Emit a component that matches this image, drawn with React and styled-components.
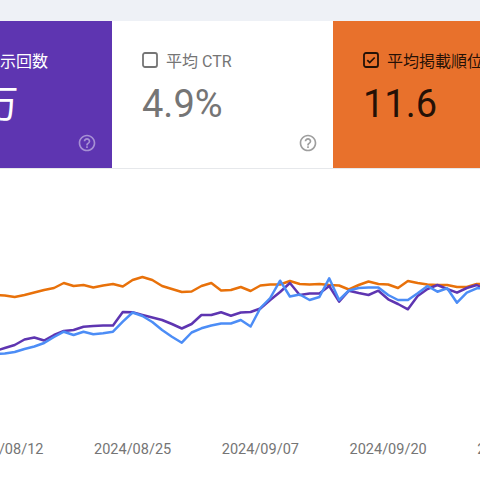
import React from 'react';
import styled, { createGlobalStyle } from 'styled-components';

const GlobalStyle = createGlobalStyle`
  html,
  body {
    margin: 0;
    padding: 0;
    background: #fff;
  }

  body {
    font-family: Roboto, 'Noto Sans CJK JP', sans-serif;
    overflow: hidden;
  }
`;

const Page = styled.div`
  width: 480px;
  height: 480px;
  overflow: hidden;
  display: flex;
  flex-direction: column;
  background: #fff;
`;

const TopBand = styled.div`
  flex: 0 0 21px;
  background: #eef1f6;
`;

const CardRow = styled.div`
  display: flex;
  flex: 0 0 147px;
  margin-left: -102px;
  border-bottom: 1px solid #e6e8eb;
`;

const Card = styled.div`
  flex: 0 0 ${({ $width }) => $width}px;
  box-sizing: border-box;
  display: flex;
  flex-direction: column;
  padding: 27px 15px 15px 30px;
  background: ${({ $bg }) => $bg};
  color: ${({ $fg }) => $fg};
`;

const CardLabel = styled.div`
  display: flex;
  align-items: center;
  gap: 8px;
  height: 24px;
  font-size: 16px;
  white-space: nowrap;
`;

const Value = styled.div`
  margin-top: 10px;
  font-size: 38px;
  line-height: 44px;
  white-space: nowrap;
`;

const Help = styled.svg`
  margin-top: auto;
  align-self: flex-end;
  width: 20px;
  height: 20px;
  fill: ${({ $color }) => $color};
`;

const ChartSvg = styled.svg`
  display: block;
  flex: 0 0 268px;
  width: 480px;
`;

const AxisRow = styled.div`
  display: flex;
  margin-left: -59px;
  height: 26px;
  line-height: 26px;
  font-size: 14.5px;
  color: #757575;
`;

const AxisLabel = styled.span`
  flex: 0 0 127.75px;
  text-align: center;
  white-space: nowrap;
`;

const Checkbox = ({ checked, color }) => (
  <svg width="16" height="16" viewBox="0 0 16 16">
    <rect x="1" y="1" width="14" height="14" rx="2" fill="none" stroke={color} strokeWidth="1.8" />
    {checked && (
      <path d="M4.3 8.2l2.4 2.4 5-5.1" fill="none" stroke={color} strokeWidth="1.7" />
    )}
  </svg>
);

const HelpIcon = ({ color }) => (
  <Help viewBox="0 0 24 24" $color={color}>
    <path d="M11 18h2v-2h-2v2zm1-16C6.48 2 2 6.48 2 12s4.48 10 10 10 10-4.48 10-10S17.52 2 12 2zm0 18c-4.41 0-8-3.590-8-8s3.59-8 8-8 8 3.59 8 8-3.59 8-8 8zm0-14c-2.21 0-4 1.79-4 4h2c0-1.1.9-2 2-2s2 .9 2 2c0 2-3 1.75-3 5h2c0-2.25 3-2.5 3-5 0-2.21-1.79-4-4-4z" />
  </Help>
);

const metrics = [
  {
    label: '合計表示回数',
    value: '3.3万',
    width: 214,
    bg: '#5e35b1',
    fg: '#fff',
    box: '#fff',
    help: 'rgba(255,255,255,0.45)',
    checked: true,
  },
  {
    label: '平均 CTR',
    value: '4.9%',
    width: 221,
    bg: '#fff',
    fg: '#757575',
    box: '#757575',
    help: '#9e9e9e',
    checked: false,
  },
  {
    label: '平均掲載順位',
    value: '11.6',
    width: 221,
    bg: '#e8712c',
    fg: 'rgba(0,0,0,0.85)',
    box: 'rgba(0,0,0,0.85)',
    help: 'rgba(0,0,0,0.4)',
    checked: true,
  },
];

// one value per day, plotted in chart pixels (top of chart = 169 on the page)
const CHART_TOP = 169;
const STEP = 9.83;
const START_X = -5;

const position = [
  295, 295.5, 297, 295, 292.5, 290, 288, 283, 286, 285, 287.5, 285.5, 284, 286.5, 280, 277, 280,
  286, 289, 292, 291.5, 286, 283, 290.5, 290, 287, 291, 285.5, 284.5, 284.5, 281, 284, 284.5, 284,
  285, 285.5, 289.5, 285, 281.5, 284, 284.5, 288, 281, 283, 284.5, 285, 285, 287, 287, 284, 284,
];

const impressions = [
  351, 348, 345, 339.5, 337.5, 340.5, 335, 331, 330, 326.7, 326, 325.5, 325.5, 312, 312.3, 315,
  317.5, 320, 324, 328.5, 324, 315, 315, 312.3, 315.7, 312.5, 312, 308.5, 300, 292, 283, 295, 293.5,
  293.5, 286, 301.7, 290.7, 293, 295, 290.7, 299.3, 304, 309.3, 296, 289, 285, 289, 292.7, 288, 285,
  290,
];

const clicks = [
  354, 353.5, 352, 349, 346.5, 343, 337, 331.7, 335, 331.7, 334.3, 333.3, 331.7, 321.7, 312.5, 316,
  322, 330, 336.7, 342.7, 332.5, 328.3, 325.5, 323.5, 323.5, 320, 326.5, 308, 298, 280.7, 296.5,
  294.5, 300, 297, 278.3, 300, 290.5, 288, 287.5, 287.5, 295, 300, 300, 293.3, 286, 291.7, 288.3,
  302.7, 292.7, 288.3, 288,
];

const toPoints = (series) =>
  series.map((y, i) => `${(START_X + i * STEP).toFixed(1)},${(y - CHART_TOP).toFixed(1)}`).join(' ');

const lines = [
  { data: position, color: '#e8710a' },
  { data: impressions, color: '#5e35b1' },
  { data: clicks, color: '#4c8df6' },
];

const dates = ['2024/08/12', '2024/08/25', '2024/09/07', '2024/09/20', '2024/10/03'];

const App = () => (
  <Page>
    <GlobalStyle />
    <TopBand />
    <CardRow>
      {metrics.map((m) => (
        <Card key={m.label} $width={m.width} $bg={m.bg} $fg={m.fg}>
          <CardLabel>
            <Checkbox checked={m.checked} color={m.box} />
            {m.label}
          </CardLabel>
          <Value>{m.value}</Value>
          <HelpIcon color={m.help} />
        </Card>
      ))}
    </CardRow>
    <ChartSvg viewBox="0 0 480 268">
      {lines.map((l) => (
        <polyline
          key={l.color}
          points={toPoints(l.data)}
          fill="none"
          stroke={l.color}
          strokeWidth="2.5"
          strokeLinejoin="round"
        />
      ))}
    </ChartSvg>
    <AxisRow>
      {dates.map((d) => (
        <AxisLabel key={d}>{d}</AxisLabel>
      ))}
    </AxisRow>
  </Page>
);

export default App;
